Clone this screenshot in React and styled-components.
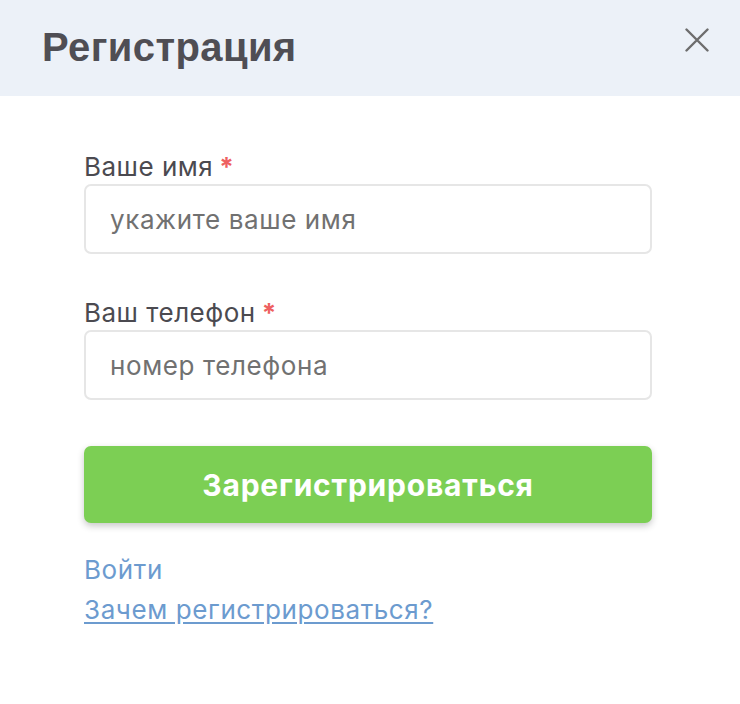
import React from 'react';
import styled, { createGlobalStyle } from 'styled-components';

const GlobalStyle = createGlobalStyle`
  html, body {
    margin: 0;
    padding: 0;
    background: #ffffff;
  }
  body {
    font-family: Inter, "Noto Sans", sans-serif;
  }
`;

const Modal = styled.div`
  width: 740px;
  min-height: 704px;
  background: #ffffff;
`;

const Header = styled.div`
  height: 96px;
  background: #ecf1f8;
  display: flex;
  align-items: center;
  justify-content: space-between;
  padding: 0 31px 0 42px;
  box-sizing: border-box;
`;

const Title = styled.h1`
  margin: 0;
  font-family: "Liberation Sans", Arial, sans-serif;
  font-weight: bold;
  font-size: 40px;
  color: #4f4e54;
  letter-spacing: 0.4px;
  padding-bottom: 2px;
`;

const CloseButton = styled.button`
  border: 0;
  background: transparent;
  padding: 0;
  width: 24px;
  height: 24px;
  display: flex;
  align-items: center;
  justify-content: center;
  cursor: pointer;
  margin-bottom: 16px;
`;

const Body = styled.form`
  padding: 56px 88px 0 84px;
  display: flex;
  flex-direction: column;
`;

const Field = styled.label`
  display: flex;
  flex-direction: column;
  margin-bottom: ${p => p.$gap || 0}px;
`;

const LabelText = styled.span`
  font-size: 26px;
  letter-spacing: 0.5px;
  line-height: 30px;
  color: #4b4a50;
  margin-bottom: 2px;
`;

const Star = styled.span`
  color: #ee6060;
  font-weight: bold;
  margin-left: 6px;
`;

const Input = styled.input`
  height: 70px;
  box-sizing: border-box;
  border: 2px solid #e6e6e6;
  border-radius: 7px;
  padding: 0 24px;
  font-family: Inter, "Noto Sans", sans-serif;
  font-size: 26px;
  letter-spacing: 0.6px;
  color: #333;
  outline: none;
  &::placeholder {
    color: #717171;
  }
`;

const Submit = styled.button`
  margin-top: 46px;
  height: 77px;
  border: 0;
  border-radius: 7px;
  background: #7ccf54;
  color: #ffffff;
  font-family: Inter, "Noto Sans", sans-serif;
  font-weight: bold;
  font-size: 30px;
  letter-spacing: 0.8px;
  box-shadow: 0 3px 7px rgba(0, 0, 0, 0.22);
  cursor: pointer;
`;

const Links = styled.div`
  margin-top: 27px;
  display: flex;
  flex-direction: column;
  align-items: flex-start;
`;

const Link = styled.a`
  font-size: 26px;
  letter-spacing: 0.6px;
  line-height: 40px;
  color: #6c9bcf;
  text-decoration: ${p => (p.$underline ? 'underline' : 'none')};
  text-underline-offset: 3px;
  cursor: pointer;
`;

export default function App() {
  return (
    <>
      <GlobalStyle />
      <Modal>
        <Header>
          <Title>Регистрация</Title>
          <CloseButton aria-label="close">
            <svg width="24" height="24" viewBox="0 0 24 24">
              <path d="M1.5 1.5 L22.5 22.5 M22.5 1.5 L1.5 22.5" stroke="#6d6d6d" strokeWidth="2.4" strokeLinecap="round" />
            </svg>
          </CloseButton>
        </Header>
        <Body onSubmit={e => e.preventDefault()}>
          <Field $gap={44}>
            <LabelText>Ваше имя<Star>*</Star></LabelText>
            <Input placeholder="укажите ваше имя" />
          </Field>
          <Field>
            <LabelText>Ваш телефон<Star>*</Star></LabelText>
            <Input placeholder="номер телефона" />
          </Field>
          <Submit type="submit">Зарегистрироваться</Submit>
          <Links>
            <Link>Войти</Link>
            <Link $underline>Зачем регистрироваться?</Link>
          </Links>
        </Body>
      </Modal>
    </>
  );
}
